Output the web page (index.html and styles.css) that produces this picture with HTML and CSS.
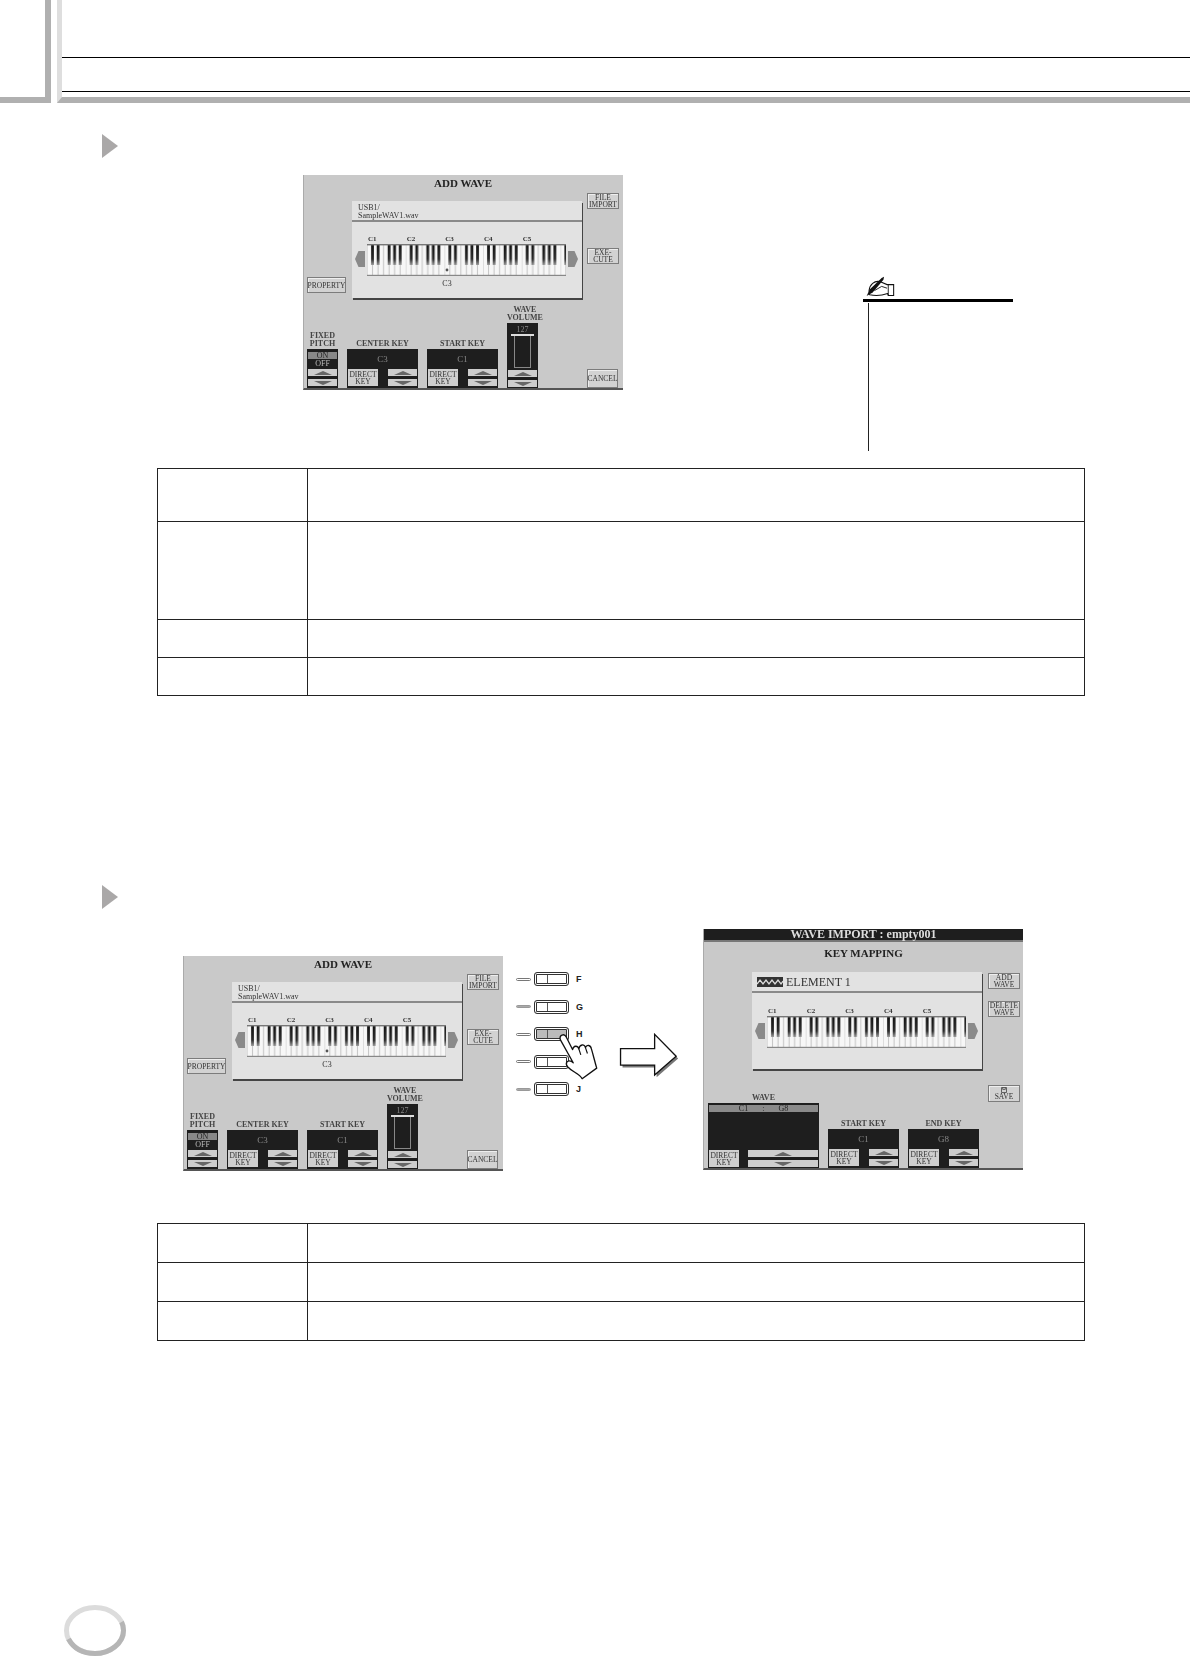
FILE: index.html
```html
<!DOCTYPE html>
<html lang="en">
<head>
    <meta charset="UTF-8">
    <title>Wave Import</title>
    <link rel="stylesheet" href="styles.css">
</head>
<body>
    <!-- shared keyboard drawing -->
    <svg class="defs" width="0" height="0">
        <defs>
            <linearGradient id="blackKey" x1="0" y1="0" x2="0" y2="1">
                <stop offset="0" stop-color="#111"/>
                <stop offset="0.7" stop-color="#2a2a2a"/>
                <stop offset="1" stop-color="#999"/>
            </linearGradient>
            <pattern id="octave" width="38.67" height="32" patternUnits="userSpaceOnUse">
                <rect width="38.67" height="32" fill="#f7f7f7"/>
                <path d="M0 0V32M5.52 0V32M11.05 0V32M16.57 0V32M22.1 0V32M27.62 0V32M33.15 0V32" stroke="#b5b5b5" stroke-width="0.8"/>
                <rect x="4.1" y="1" width="2.8" height="20" fill="url(#blackKey)"/>
                <rect x="9.7" y="1" width="2.8" height="20" fill="url(#blackKey)"/>
                <rect x="20.7" y="1" width="2.8" height="20" fill="url(#blackKey)"/>
                <rect x="26.2" y="1" width="2.8" height="20" fill="url(#blackKey)"/>
                <rect x="31.8" y="1" width="2.8" height="20" fill="url(#blackKey)"/>
            </pattern>
            <symbol id="keyboard" viewBox="0 0 199 32">
                <rect width="199" height="32" fill="url(#octave)"/>
                <rect width="199" height="1.4" fill="#777"/>
                <rect y="30.8" width="199" height="1.2" fill="#888"/>
            </symbol>
        </defs>
    </svg>

    <header class="page-head">
        <div class="head-tab"></div>
        <div class="head-title">
            <div class="head-rule"></div>
        </div>
    </header>

    <section class="step-top">
        <div class="step-marker"></div>
        <div class="screen screen-first">
            <div class="screen-title">ADD WAVE</div>
            <div class="screen-row">
                <div class="side-left">
                    <div class="btn btn-property">PROPERTY</div>
                </div>
                <div class="panel">
                    <div class="panel-head">USB1/<br>SampleWAV1.wav</div>
                    <div class="panel-body">
                        <div class="arrow arrow-left"></div>
                        <div class="key-area">
                            <div class="octave-labels"><span>C1</span><span>C2</span><span>C3</span><span>C4</span><span>C5</span></div>
                            <svg class="keys" viewBox="0 0 199 32">
                                <use href="#keyboard"/>
                                <circle cx="80" cy="26" r="1.4" fill="#555"/>
                            </svg>
                            <div class="center-note">C3</div>
                        </div>
                        <div class="arrow arrow-right"></div>
                    </div>
                </div>
                <div class="side-right">
                    <div class="btn btn-side">FILE<br>IMPORT</div>
                    <div class="btn btn-side btn-exe">EXE-<br>CUTE</div>
                </div>
            </div>
            <div class="screen-bottom">
                <div class="ctrl">
                    <div class="ctrl-label">FIXED<br>PITCH</div>
                    <div class="block block-narrow">
                        <div class="toggle-on">ON</div>
                        <div class="toggle-off">OFF</div>
                        <div class="updown">
                            <div class="btn-tri"><i class="tri-up"></i></div>
                            <div class="btn-tri"><i class="tri-down"></i></div>
                        </div>
                    </div>
                </div>
                <div class="ctrl">
                    <div class="ctrl-label">CENTER KEY</div>
                    <div class="block block-key">
                        <div class="key-value">C3</div>
                        <div class="key-controls">
                            <div class="btn btn-direct">DIRECT<br>KEY</div>
                            <div class="updown">
                                <div class="btn-tri"><i class="tri-up"></i></div>
                                <div class="btn-tri"><i class="tri-down"></i></div>
                            </div>
                        </div>
                    </div>
                </div>
                <div class="ctrl">
                    <div class="ctrl-label">START KEY</div>
                    <div class="block block-key">
                        <div class="key-value">C1</div>
                        <div class="key-controls">
                            <div class="btn btn-direct">DIRECT<br>KEY</div>
                            <div class="updown">
                                <div class="btn-tri"><i class="tri-up"></i></div>
                                <div class="btn-tri"><i class="tri-down"></i></div>
                            </div>
                        </div>
                    </div>
                </div>
                <div class="ctrl">
                    <div class="ctrl-label">WAVE<br>VOLUME</div>
                    <div class="block block-narrow block-volume">
                        <div class="volume-value">127</div>
                        <div class="volume-cap"></div>
                        <div class="volume-track"></div>
                        <div class="updown">
                            <div class="btn-tri"><i class="tri-up"></i></div>
                            <div class="btn-tri"><i class="tri-down"></i></div>
                        </div>
                    </div>
                </div>
                <div class="btn btn-cancel">CANCEL</div>
            </div>
        </div>
        <aside class="note">
            <svg class="note-icon" viewBox="70 40 105 80">
                <path d="M86 92C88 72 104 58 122 62L146 72H168V108H150L148 102C130 108 108 110 88 106Z" fill="#fff" stroke="#111" stroke-width="3.5"/>
                <path d="M150 72V108M104 92L128 78L146 84" fill="none" stroke="#111" stroke-width="3"/>
                <path d="M78 110L88 88L128 50L136 46L134 56L98 98Z" fill="#111"/>
            </svg>
            <div class="note-bar"></div>
            <div class="note-stem"></div>
        </aside>
    </section>

    <table class="info-table">
        <tr class="row-53"><td class="cell-name"></td><td></td></tr>
        <tr class="row-98"><td class="cell-name"></td><td></td></tr>
        <tr class="row-38"><td class="cell-name"></td><td></td></tr>
        <tr class="row-38"><td class="cell-name"></td><td></td></tr>
    </table>

    <div class="step-marker step-marker-two"></div>

    <section class="demo-row">
        <div class="screen screen-second">
            <div class="screen-title">ADD WAVE</div>
            <div class="screen-row">
                <div class="side-left">
                    <div class="btn btn-property">PROPERTY</div>
                </div>
                <div class="panel">
                    <div class="panel-head">USB1/<br>SampleWAV1.wav</div>
                    <div class="panel-body">
                        <div class="arrow arrow-left"></div>
                        <div class="key-area">
                            <div class="octave-labels"><span>C1</span><span>C2</span><span>C3</span><span>C4</span><span>C5</span></div>
                            <svg class="keys" viewBox="0 0 199 32">
                                <use href="#keyboard"/>
                                <circle cx="80" cy="26" r="1.4" fill="#555"/>
                            </svg>
                            <div class="center-note">C3</div>
                        </div>
                        <div class="arrow arrow-right"></div>
                    </div>
                </div>
                <div class="side-right">
                    <div class="btn btn-side">FILE<br>IMPORT</div>
                    <div class="btn btn-side btn-exe">EXE-<br>CUTE</div>
                </div>
            </div>
            <div class="screen-bottom">
                <div class="ctrl">
                    <div class="ctrl-label">FIXED<br>PITCH</div>
                    <div class="block block-narrow">
                        <div class="toggle-on">ON</div>
                        <div class="toggle-off">OFF</div>
                        <div class="updown">
                            <div class="btn-tri"><i class="tri-up"></i></div>
                            <div class="btn-tri"><i class="tri-down"></i></div>
                        </div>
                    </div>
                </div>
                <div class="ctrl">
                    <div class="ctrl-label">CENTER KEY</div>
                    <div class="block block-key">
                        <div class="key-value">C3</div>
                        <div class="key-controls">
                            <div class="btn btn-direct">DIRECT<br>KEY</div>
                            <div class="updown">
                                <div class="btn-tri"><i class="tri-up"></i></div>
                                <div class="btn-tri"><i class="tri-down"></i></div>
                            </div>
                        </div>
                    </div>
                </div>
                <div class="ctrl">
                    <div class="ctrl-label">START KEY</div>
                    <div class="block block-key">
                        <div class="key-value">C1</div>
                        <div class="key-controls">
                            <div class="btn btn-direct">DIRECT<br>KEY</div>
                            <div class="updown">
                                <div class="btn-tri"><i class="tri-up"></i></div>
                                <div class="btn-tri"><i class="tri-down"></i></div>
                            </div>
                        </div>
                    </div>
                </div>
                <div class="ctrl">
                    <div class="ctrl-label">WAVE<br>VOLUME</div>
                    <div class="block block-narrow block-volume">
                        <div class="volume-value">127</div>
                        <div class="volume-cap"></div>
                        <div class="volume-track"></div>
                        <div class="updown">
                            <div class="btn-tri"><i class="tri-up"></i></div>
                            <div class="btn-tri"><i class="tri-down"></i></div>
                        </div>
                    </div>
                </div>
                <div class="btn btn-cancel">CANCEL</div>
            </div>
        </div>

        <div class="panel-buttons">
            <div class="pb-row"><i class="led"></i><div class="pb"><i class="pb-seg"></i></div><span class="pb-letter">F</span></div>
            <div class="pb-row"><i class="led led-on"></i><div class="pb"><i class="pb-seg"></i></div><span class="pb-letter">G</span></div>
            <div class="pb-row"><i class="led"></i><div class="pb pb-pressed"><i class="pb-seg"></i></div><span class="pb-letter">H</span></div>
            <div class="pb-row"><i class="led"></i><div class="pb"><i class="pb-seg"></i></div></div>
            <div class="pb-row"><i class="led led-on"></i><div class="pb"><i class="pb-seg"></i></div><span class="pb-letter">J</span></div>
            <svg class="hand" viewBox="165 250 125 145">
                <path d="M174 270C170 256 186 250 192 262L211 300C214 288 226 286 230 298C232 284 248 282 250 294C254 284 266 286 268 298C274 318 278 336 284 356L240 388C232 372 210 368 196 352C188 342 194 330 208 336L213 340Z" fill="#fff" stroke="#111" stroke-width="4" stroke-linejoin="round"/>
                <path d="M230 298L236 316M250 294L256 312" fill="none" stroke="#111" stroke-width="3.5"/>
            </svg>
        </div>

        <svg class="big-arrow" viewBox="355 245 192 145">
            <path d="M368 302H471V259L536 325L471 382V352H368Z" fill="#777"/>
            <path d="M362 295H465V252L530 318L465 375V345H362Z" fill="#fff" stroke="#111" stroke-width="4"/>
        </svg>

        <div class="screen screen-mapping">
            <div class="mapping-bar">WAVE IMPORT : empty001</div>
            <div class="screen-title mapping-title">KEY MAPPING</div>
            <div class="map-layout">
                <div class="map-main">
                    <div class="panel">
                        <div class="panel-head panel-head-map">
                            <svg class="wave-icon" viewBox="0 0 26 10">
                                <rect width="26" height="10" fill="#333"/>
                                <path d="M0 7L3 3L6 7L9 3L12 7L15 3L18 7L21 3L24 7L26 4" fill="none" stroke="#ddd" stroke-width="1.3"/>
                            </svg>
                            <span>ELEMENT 1</span>
                        </div>
                        <div class="panel-body panel-body-map">
                            <div class="arrow arrow-left"></div>
                            <div class="key-area">
                                <div class="octave-labels"><span>C1</span><span>C2</span><span>C3</span><span>C4</span><span>C5</span></div>
                                <svg class="keys" viewBox="0 0 199 32"><use href="#keyboard"/></svg>
                            </div>
                            <div class="arrow arrow-right"></div>
                        </div>
                    </div>
                    <div class="screen-bottom">
                        <div class="ctrl">
                            <div class="ctrl-label">WAVE</div>
                            <div class="block block-wave">
                                <div class="wave-range"><span>C1</span><span>:</span><span>G8</span></div>
                                <div class="key-controls">
                                    <div class="btn btn-direct">DIRECT<br>KEY</div>
                                    <div class="updown updown-wide">
                                        <div class="btn-tri"><i class="tri-up"></i></div>
                                        <div class="btn-tri"><i class="tri-down"></i></div>
                                    </div>
                                </div>
                            </div>
                        </div>
                        <div class="ctrl">
                            <div class="ctrl-label">START KEY</div>
                            <div class="block block-key">
                                <div class="key-value">C1</div>
                                <div class="key-controls">
                                    <div class="btn btn-direct">DIRECT<br>KEY</div>
                                    <div class="updown">
                                        <div class="btn-tri"><i class="tri-up"></i></div>
                                        <div class="btn-tri"><i class="tri-down"></i></div>
                                    </div>
                                </div>
                            </div>
                        </div>
                        <div class="ctrl">
                            <div class="ctrl-label">END KEY</div>
                            <div class="block block-key">
                                <div class="key-value">G8</div>
                                <div class="key-controls">
                                    <div class="btn btn-direct">DIRECT<br>KEY</div>
                                    <div class="updown">
                                        <div class="btn-tri"><i class="tri-up"></i></div>
                                        <div class="btn-tri"><i class="tri-down"></i></div>
                                    </div>
                                </div>
                            </div>
                        </div>
                    </div>
                </div>
                <div class="side-right side-right-map">
                    <div class="btn btn-side">ADD<br>WAVE</div>
                    <div class="btn btn-side btn-delete">DELETE<br>WAVE</div>
                    <div class="btn btn-side btn-save">
                        <svg class="save-icon" viewBox="0 0 6 6"><path d="M.5.5H5.5V5.5H.5ZM1.7.5V2.4H4.3V.5" fill="none" stroke="#444" stroke-width=".8"/></svg>
                        SAVE
                    </div>
                </div>
            </div>
        </div>
    </section>

    <table class="info-table">
        <tr class="row-39"><td class="cell-name"></td><td></td></tr>
        <tr class="row-39"><td class="cell-name"></td><td></td></tr>
        <tr class="row-39"><td class="cell-name"></td><td></td></tr>
    </table>

    <svg class="page-ring" viewBox="0 0 62 51">
        <ellipse cx="31" cy="25.5" rx="28.5" ry="23" fill="none" stroke="#dcdcdc" stroke-width="5"/>
        <path d="M4.5 34C10 44 20 48.5 31 48.5C46 48.5 59.5 38 59.5 25.5C59.5 22 59 19.5 57.5 17" fill="none" stroke="#b5b5b5" stroke-width="5"/>
    </svg>
</body>
</html>
```

FILE: styles.css
```css
* {
    box-sizing: border-box;
}

body {
    margin: 0;
    background-color: #fff;
    font-family: "Liberation Serif", serif;
    color: #222;
}

.defs {
    display: block;
}

/* page header */
.page-head {
    display: flex;
    height: 103px;
}

.head-tab {
    width: 51px;
    border-right: 6px solid #b0b0b0;
    border-bottom: 6px solid #b0b0b0;
}

.head-title {
    flex: 1;
    margin-left: 6px;
    padding-top: 57px;
    border-left: 5px solid #dedede;
    border-bottom: 6px solid #b0b0b0;
}

.head-rule {
    height: 35px;
    border-top: 1px solid #000;
    border-bottom: 1px solid #000;
}

.step-top {
    display: flex;
    height: 365px;
}

.step-marker {
    flex: none;
    width: 0;
    height: 0;
    margin-left: 102px;
    margin-top: 31px;
    border-left: 16px solid #aaa8a8;
    border-top: 12px solid transparent;
    border-bottom: 12px solid transparent;
}

.step-marker-two {
    margin-top: 189px;
}

/* LCD screens */
.screen {
    flex: none;
    display: flex;
    flex-direction: column;
    width: 320px;
    height: 215px;
    padding-left: 3px;
    background-color: #c9c9c9;
    border-left: 1px solid #aaa;
    border-bottom: 2px solid #555;
    filter: blur(0.35px);
}

.screen-first {
    margin-left: 185px;
    margin-top: 72px;
}

.screen-title {
    height: 18px;
    padding-top: 2px;
    padding-right: 4px;
    font-size: 11px;
    line-height: 12px;
    font-weight: bold;
    text-align: center;
}

.screen-row {
    display: flex;
}

.side-left {
    flex: none;
    width: 45px;
    padding-top: 84px;
}

.side-right {
    flex: none;
    width: 32px;
    margin-left: 5px;
}

.btn {
    display: flex;
    align-items: center;
    justify-content: center;
    text-align: center;
    background-color: #d2d2d2;
    border: 1px solid #7c7c7c;
    box-shadow: inset 1px 1px 0 #eee;
    font-size: 7.5px;
    line-height: 7px;
    color: #333;
}

.btn-property {
    width: 39px;
    height: 16px;
}

.btn-side {
    width: 32px;
    height: 16px;
}

.btn-exe {
    margin-top: 39px;
}

.btn-delete {
    margin-top: 12px;
}

.btn-save {
    flex-direction: column;
    height: 17px;
    margin-top: 68px;
}

.save-icon {
    width: 6px;
    height: 6px;
}

.btn-cancel {
    flex: none;
    width: 31px;
    height: 19px;
    margin-left: auto;
    margin-right: 5px;
}

.panel {
    flex: none;
    width: 230px;
    height: 97px;
    margin-top: 8px;
    background-color: #e2e2e2;
    box-shadow: 1px 2px 0 #444;
}

.panel-head {
    height: 21px;
    padding: 3px 0 0 6px;
    border-bottom: 2px solid #8a8a8a;
    font-size: 8px;
    line-height: 8px;
    color: #333;
}

.panel-head-map {
    display: flex;
    align-items: center;
    gap: 3px;
    padding: 0 0 0 5px;
    font-size: 12px;
}

.wave-icon {
    width: 26px;
    height: 10px;
}

.panel-body {
    display: flex;
    padding-top: 14px;
    padding-left: 3px;
    gap: 2px;
}

.arrow {
    flex: none;
    width: 10px;
    height: 16px;
    margin-top: 15px;
    background-color: #8a8a8a;
}

.arrow-left {
    clip-path: polygon(0 50%, 35% 0, 100% 0, 100% 100%, 35% 100%);
}

.arrow-right {
    clip-path: polygon(100% 50%, 65% 0, 0 0, 0 100%, 65% 100%);
}

.key-area {
    width: 199px;
}

.octave-labels {
    display: flex;
    height: 7px;
    font-size: 7px;
    line-height: 7px;
    font-weight: bold;
    color: #333;
}

.octave-labels span {
    width: 38.67px;
    padding-left: 1px;
}

.keys {
    display: block;
    width: 199px;
    height: 32px;
    margin-top: 1px;
}

.center-note {
    width: 160px;
    margin-top: 3px;
    text-align: center;
    font-size: 8px;
    line-height: 9px;
    color: #333;
}

/* bottom controls */
.screen-bottom {
    display: flex;
    align-items: flex-end;
    gap: 9px;
    margin-top: auto;
}

.ctrl-label {
    margin-bottom: 1px;
    text-align: center;
    font-size: 8px;
    line-height: 8px;
    font-weight: bold;
    color: #444;
}

.block {
    background-color: #1e1e1e;
    color: #888;
    font-size: 8px;
    padding: 1px;
}

.block-narrow {
    width: 31px;
    height: 39px;
}

.block-key {
    width: 71px;
    height: 39px;
}

.block-volume {
    height: 65px;
    padding-top: 3px;
}

.block-wave {
    display: flex;
    flex-direction: column;
    justify-content: space-between;
    width: 111px;
    height: 65px;
}

.toggle-on {
    height: 7px;
    margin-top: 2px;
    background-color: #888;
    color: #222;
    line-height: 7px;
    text-align: center;
}

.toggle-off {
    height: 7px;
    margin-top: 1px;
    margin-bottom: 2px;
    color: #bbb;
    line-height: 8px;
    text-align: center;
}

.updown {
    display: flex;
    flex-direction: column;
    gap: 3px;
    width: 29px;
}

.updown-wide {
    width: 70px;
}

.btn-tri {
    display: flex;
    align-items: center;
    justify-content: center;
    height: 7px;
    background-color: #cdcdcd;
}

.tri-up,
.tri-down {
    width: 0;
    height: 0;
    border-left: 9px solid transparent;
    border-right: 9px solid transparent;
}

.tri-up {
    border-bottom: 4px solid #666;
}

.tri-down {
    border-top: 4px solid #666;
}

.key-value {
    height: 19px;
    line-height: 18px;
    text-align: center;
    font-size: 9px;
}

.key-controls {
    display: flex;
    justify-content: space-between;
}

.btn-direct {
    width: 30px;
    height: 17px;
    border: none;
    box-shadow: none;
    background-color: #cfcfcf;
}

.volume-value {
    height: 7px;
    line-height: 7px;
    text-align: center;
}

.volume-cap {
    height: 2px;
    margin: 1px 3px 0;
    background-color: #ddd;
}

.volume-track {
    width: 17px;
    height: 32px;
    margin: 0 auto 2px;
    border: 1px solid #888;
    border-top: none;
}

.wave-range {
    display: flex;
    justify-content: center;
    gap: 14px;
    height: 7px;
    margin-top: 1px;
    background-color: #8a8a8a;
    color: #222;
    line-height: 7px;
}

/* mapping screen */
.screen-mapping {
    width: 320px;
    height: 241px;
    margin-left: 21px;
    padding-left: 0;
}

.mapping-bar {
    height: 13px;
    background-color: #1e1e1e;
    border-bottom: 2px solid #777;
    color: #ddd;
    font-size: 12px;
    line-height: 11px;
    font-weight: bold;
    text-align: center;
}

.mapping-title {
    height: 26px;
    padding-top: 5px;
    padding-right: 0;
}

.map-layout {
    flex: 1;
    display: flex;
}

.map-main {
    flex: none;
    display: flex;
    flex-direction: column;
    width: 284px;
    padding-left: 4px;
}

.map-main .panel {
    margin-top: 4px;
    margin-left: 44px;
}

.panel-body-map {
    padding-top: 15px;
}

.side-right-map {
    width: 32px;
    margin-left: 0;
    padding-top: 5px;
}

/* hardware buttons */
.demo-row {
    display: flex;
    align-items: flex-start;
    height: 294px;
    margin-top: 20px;
    padding-left: 183px;
}

.screen-second {
    margin-top: 27px;
}

.panel-buttons {
    position: relative;
    flex: none;
    display: flex;
    flex-direction: column;
    gap: 13.5px;
    width: 74px;
    margin-left: 13px;
    margin-top: 43px;
}

.pb-row {
    display: flex;
    align-items: center;
    height: 14px;
}

.led {
    width: 15px;
    height: 3px;
    margin-right: 3px;
    border: 1px solid #777;
    border-radius: 2px;
    background-color: #fff;
}

.led-on {
    background-color: #aaa;
    border-color: #999;
}

.pb {
    display: flex;
    width: 35px;
    height: 14px;
    padding: 1px;
    border: 1px solid #333;
    border-radius: 3px;
    background-color: #fff;
    box-shadow: inset 0 0 0 1px #fff, inset 0 0 0 2px #333;
}

.pb-pressed {
    background-color: #bbb;
}

.pb-seg {
    width: 12px;
    margin: 1px 0;
    border-right: 1px solid #555;
}

.pb-letter {
    margin-left: 7px;
    font-family: "Liberation Sans", sans-serif;
    font-size: 9px;
    font-weight: bold;
}

.hand {
    position: absolute;
    left: 41px;
    top: 61px;
    width: 42px;
    height: 48px;
}

.big-arrow {
    flex: none;
    width: 64px;
    height: 48px;
    margin-left: 28px;
    margin-top: 103px;
}

/* side note */
.note {
    flex: none;
    width: 150px;
    margin-left: 240px;
    margin-top: 172px;
}

.note-icon {
    display: block;
    width: 34px;
    height: 24px;
}

.note-bar {
    height: 3px;
    background-color: #000;
}

.note-stem {
    width: 1px;
    height: 148px;
    margin-top: 1px;
    margin-left: 5px;
    background-color: #222;
}

/* tables */
.info-table {
    width: 928px;
    margin-left: 157px;
    border-collapse: collapse;
    table-layout: fixed;
}

.info-table td {
    padding: 0;
    border: 1px solid #222;
}

.cell-name {
    width: 150px;
}

.row-53 {
    height: 53px;
}

.row-98 {
    height: 98px;
}

.row-38 {
    height: 38px;
}

.row-39 {
    height: 39px;
}

.page-ring {
    display: block;
    width: 62px;
    height: 51px;
    margin-top: 264px;
    margin-left: 64px;
}
```
